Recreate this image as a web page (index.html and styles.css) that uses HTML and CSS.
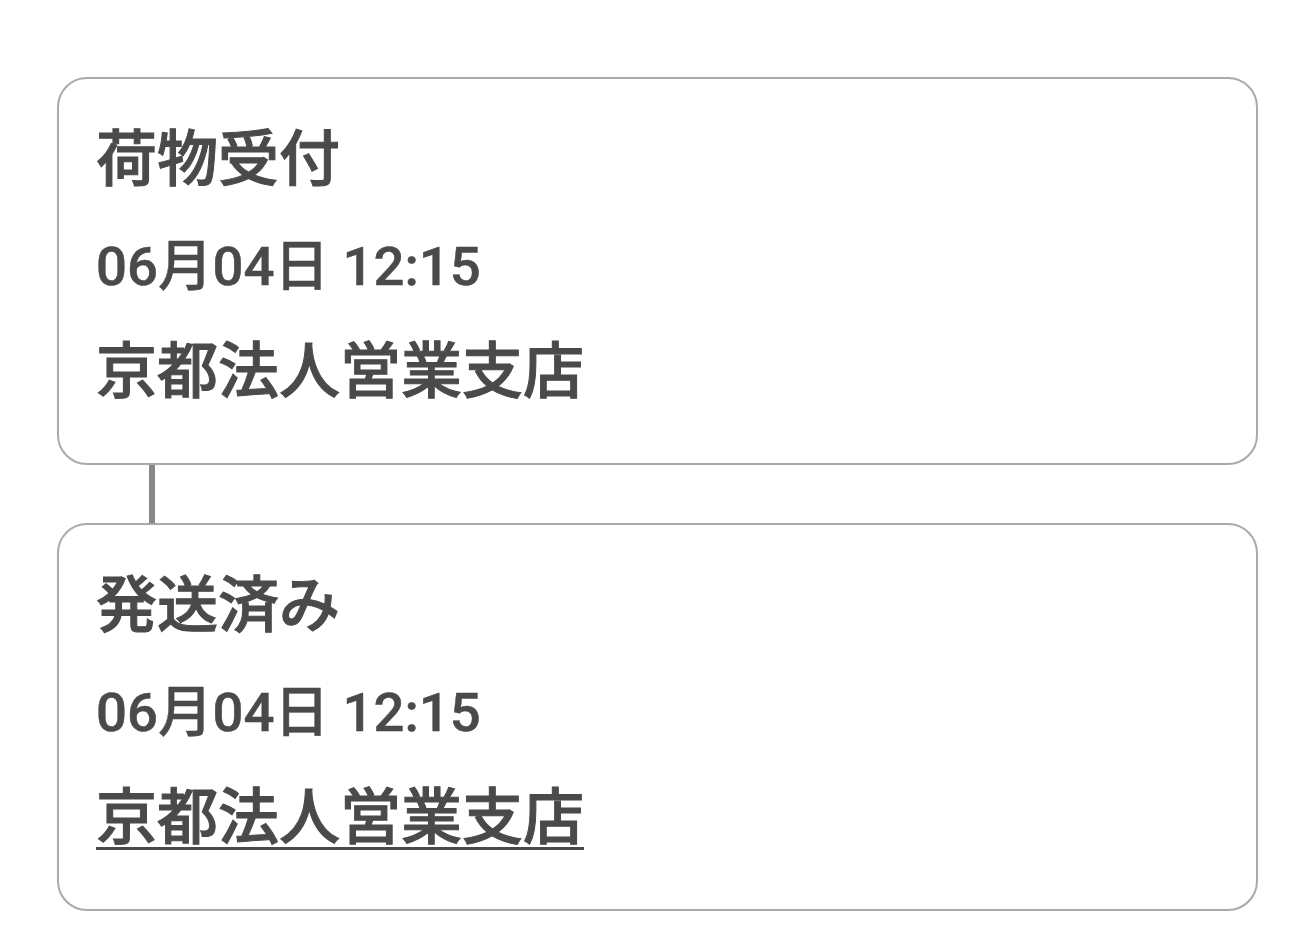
FILE: index.html
```html
<!DOCTYPE html>
<html lang="ja">
<head>
    <meta charset="UTF-8">
    <meta name="viewport" content="width=device-width, initial-scale=1.0">
    <title>配送状況</title>
    <link rel="stylesheet" href="styles.css">
</head>
<body>
    <div class="timeline">
        <div class="step">
            <p class="step-status">荷物受付</p>
            <p class="step-time">06月04日 12:15</p>
            <p class="step-place">京都法人営業支店</p>
        </div>

        <div class="connector"></div>

        <div class="step">
            <p class="step-status">発送済み</p>
            <p class="step-time">06月04日 12:15</p>
            <p class="step-place"><a href="#">京都法人営業支店</a></p>
        </div>
    </div>
</body>
</html>
```

FILE: styles.css
```css
* {
    margin: 0;
    padding: 0;
    box-sizing: border-box;
}

body {
    font-family: Roboto, "Noto Sans CJK JP", sans-serif;
    background: #fff;
    color: #4a4a4a;
}

.timeline {
    width: 1201px;
    margin: 77px 0 0 57px;
    display: flex;
    flex-direction: column;
}

.step {
    border: 2px solid #aaa;
    border-radius: 30px;
    padding: 28px 37px 38px;
}

.step p {
    font-size: 61px;
    font-weight: 500;
    line-height: 106px;
    /* the CJK face only ships regular/bold, so thicken it a little */
    -webkit-text-stroke: 1px currentColor;
}

.step .step-time {
    font-size: 54.5px;
    -webkit-text-stroke: 0.5px currentColor;
}

.step-place a {
    color: inherit;
    text-decoration: underline;
    text-decoration-thickness: 3px;
    text-underline-offset: 8px;
}

/* line between two steps */
.connector {
    width: 6px;
    height: 58px;
    margin-left: 92px;
    background: #888;
}
```
